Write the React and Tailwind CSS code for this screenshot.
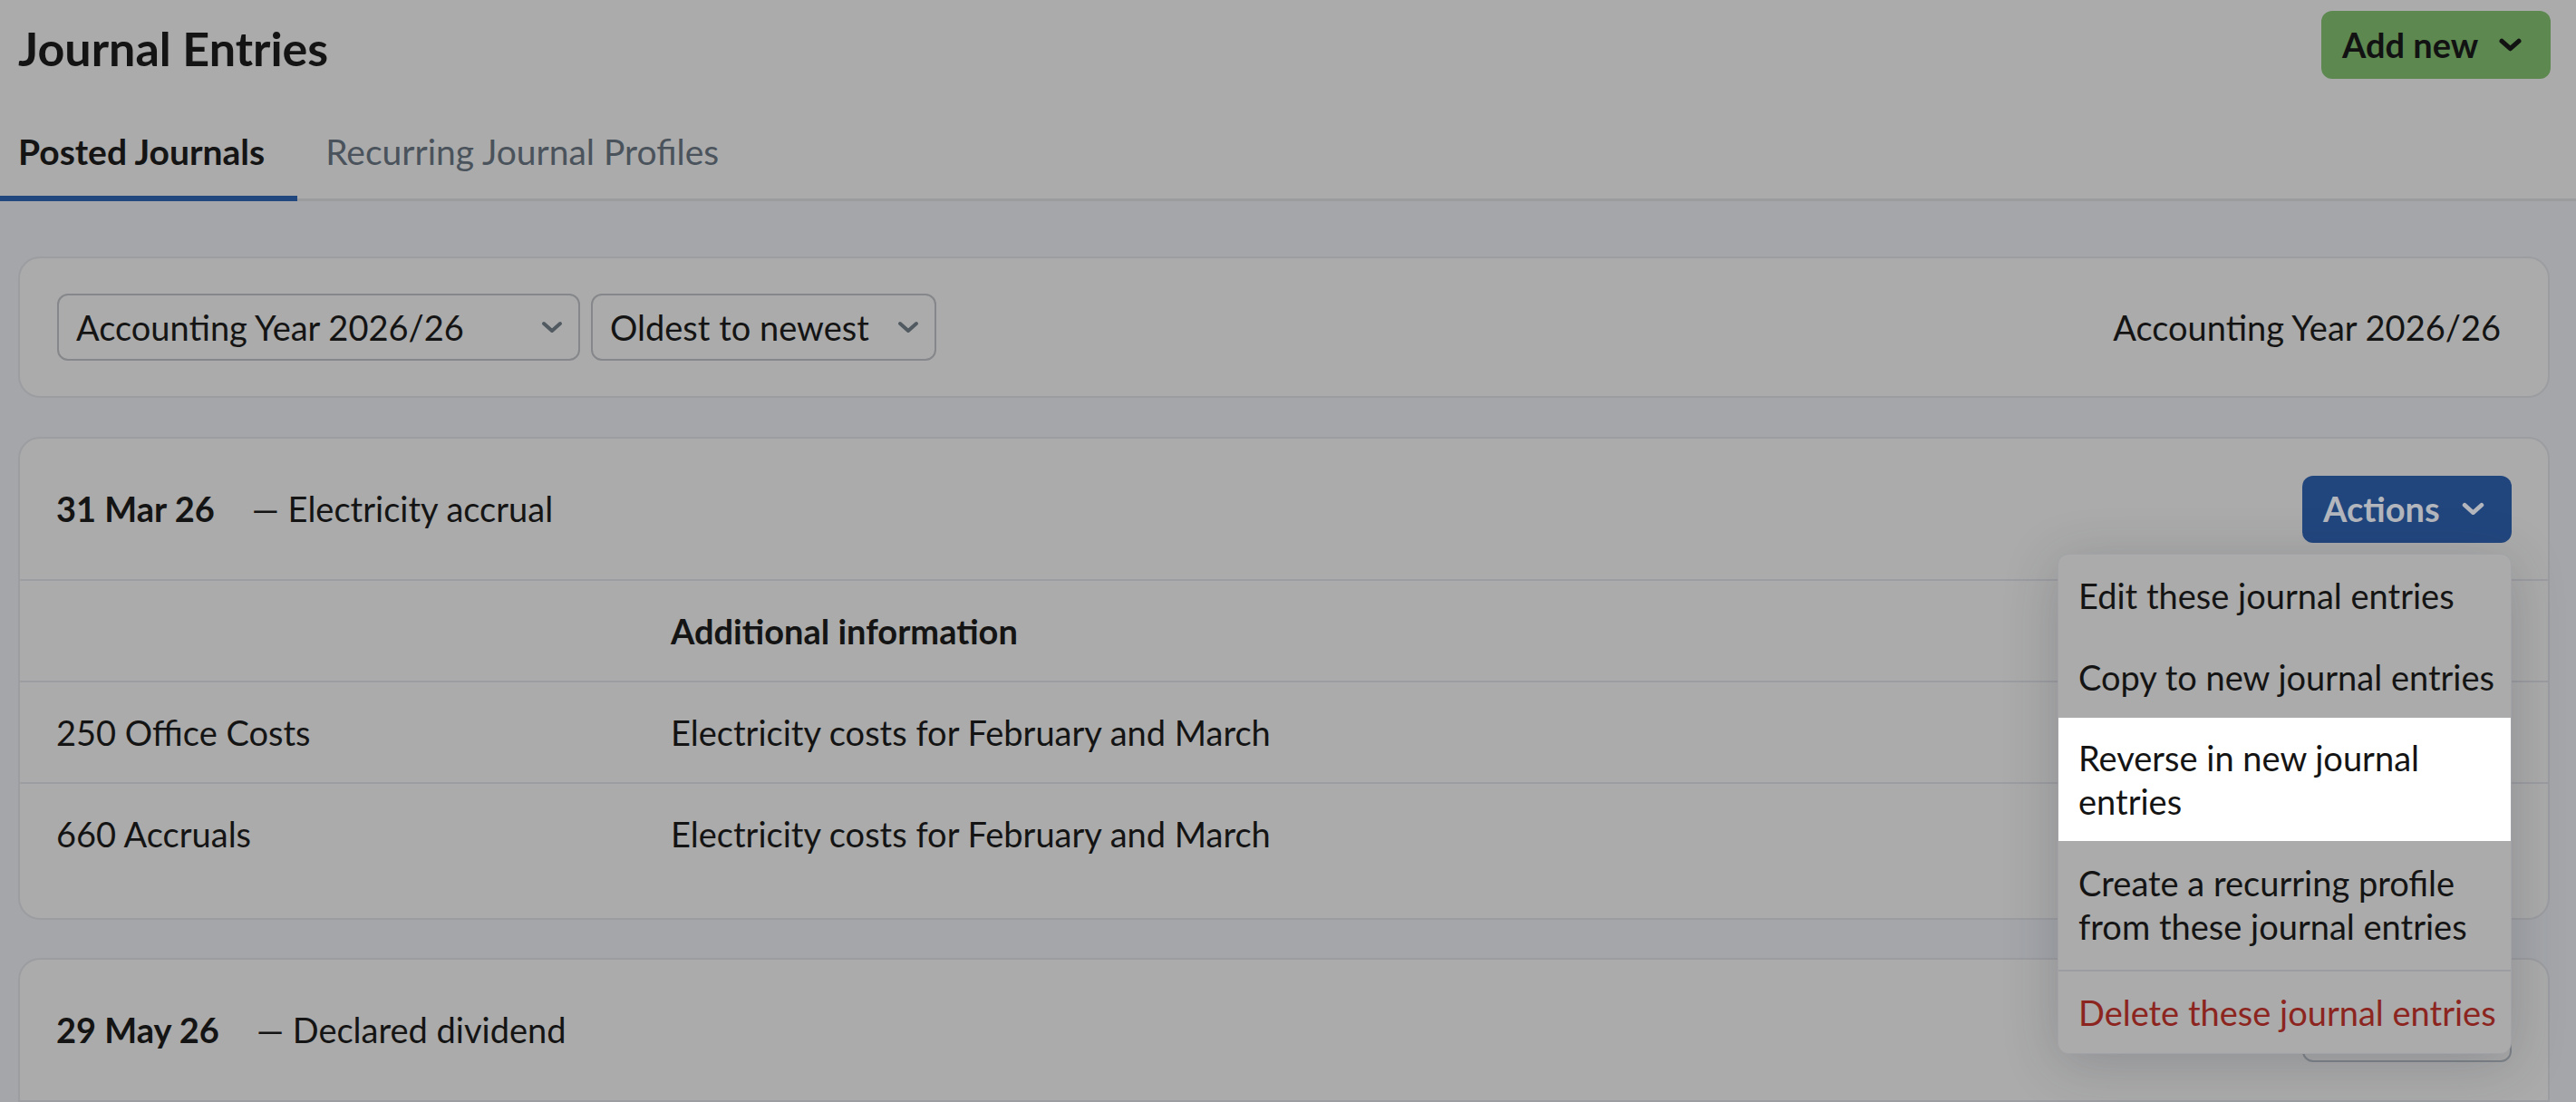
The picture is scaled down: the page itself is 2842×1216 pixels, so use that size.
import React from 'react';

const Chevron = ({ className = '', stroke = 'currentColor', width = 4 }) => (
  <svg viewBox="0 0 24 14" className={className} fill="none">
    <polyline points="3,3 12,11 21,3" stroke={stroke} strokeWidth={width} strokeLinecap="round" strokeLinejoin="round" />
  </svg>
);

const Select = ({ label, className }) => (
  <div className={`h-[74px] border-2 border-[#85878a] rounded-[12px] pl-[19px] pr-[17px] flex items-center justify-between ${className}`}>
    <span className="text-[38px] leading-none text-[#141414]">{label}</span>
    <Chevron className="w-[24px] h-[14px] text-[#505a60]" width={4} />
  </div>
);

const menuItems = [
  { label: 'Edit these journal entries' },
  { label: 'Copy to new journal entries' },
  { label: ['Reverse in new journal', 'entries'], active: true },
  { label: ['Create a recurring profile', 'from these journal entries'] },
];

const ActionsMenu = () => (
  <div className="absolute right-0 top-[86px] z-10 w-[501px] bg-[#ababab] border border-[#a2a3a7] rounded-[12px] shadow-[0_10px_60px_rgba(40,45,60,0.22)] overflow-hidden">
    {menuItems.map((item, i) => {
      const twoLine = Array.isArray(item.label);
      return (
        <div
          key={i}
          className={`px-[22px] whitespace-nowrap text-[38px] leading-[48px] text-[#141414] ${
            item.active ? 'bg-white' : ''
          } ${twoLine ? (item.active ? 'py-[20px]' : 'pt-[22px] pb-[24px]') : 'py-[21px]'}`}
        >
          {twoLine ? (
            <>
              {item.label[0]}
              <br />
              {item.label[1]}
            </>
          ) : (
            item.label
          )}
        </div>
      );
    })}
    <div className="border-t-2 border-[#9c9da1] px-[22px] py-[21px] whitespace-nowrap text-[38px] leading-[48px] text-[#8c2520]">
      Delete these journal entries
    </div>
  </div>
);

const Row = ({ account, info, last }) => (
  <div className={`flex items-center text-[38px] text-[#141414] ${last ? 'h-[148px] pb-[38px]' : 'h-[112px] border-b-2 border-[#9c9da1]'}`}>
    <div className="w-[718px] pl-[40px]">{account}</div>
    <div>{info}</div>
  </div>
);

const EntryCard = ({ date, desc, open, rows, className }) => (
  <div className={`bg-[#ababab] border-2 border-[#9c9da1] ${rows ? 'rounded-[24px]' : 'rounded-t-[24px] border-b-0'} ${className}`}>
    <div className="h-[157px] border-b-2 border-[#9c9da1] px-[40px] flex items-center justify-between">
      <div className="flex items-center text-[38px] text-[#141414]">
        <span className="font-bold">{date}</span>
        <span className="ml-[41px]">— {desc}</span>
      </div>
      <div className="relative">
        {open ? (
          <button className="h-[74px] w-[231px] bg-[#21467e] rounded-[12px] pl-[23px] pr-[30px] flex items-center justify-between text-[38px] font-bold text-[#b3b6bc]">
            Actions
            <Chevron className="w-[25px] h-[15px]" width={4.5} />
          </button>
        ) : (
          <button
            aria-label="Actions"
            className="h-[74px] w-[231px] bg-[#ababab] border-2 border-[#7f848a] rounded-[12px]"
          />
        )}
        {open && <ActionsMenu />}
      </div>
    </div>
    {rows && (
      <>
        <div className="flex items-center h-[112px] border-b-2 border-[#9c9da1] text-[38px] font-bold text-[#141414]">
          <div className="w-[718px] pl-[40px]"></div>
          <div>Additional information</div>
        </div>
        {rows.map((r, i) => (
          <Row key={i} account={r[0]} info={r[1]} last={i === rows.length - 1} />
        ))}
      </>
    )}
  </div>
);

export default function App() {
  return (
    <div className="min-h-screen bg-[#a4a6aa] font-['Lato',sans-serif] text-[#141414]">
      <header className="bg-[#ababab]">
        <div className="flex items-start justify-between pl-[20px] pr-[28px] pt-[12px]">
          <h1 className="mt-[11px] text-[52px] leading-[60px] font-bold">Journal Entries</h1>
          <button className="h-[75px] w-[253px] bg-[#5d8951] rounded-[12px] pl-[23px] pr-[32px] flex items-center justify-between text-[38px] font-bold text-[#121212]">
            Add new
            <Chevron className="w-[25px] h-[15px]" width={5} />
          </button>
        </div>
        <nav className="flex border-b-[3px] border-[#9b9c9e]">
          <div className="-mb-[3px] pl-[20px] pr-[36px] pt-[57px] pb-[26px] leading-[46px] text-[39px] font-bold border-b-[6px] border-[#21477f]">
            Posted Journals
          </div>
          <div className="-mb-[3px] pl-[31px] pr-[31px] pt-[57px] pb-[26px] leading-[46px] text-[39px] text-[#4a535c] border-b-[6px] border-transparent">
            Recurring Journal Profiles
          </div>
        </nav>
      </header>

      <main className="pl-[20px] pr-[29px] pt-[61px]">
        <div className="h-[156px] bg-[#ababab] border-2 border-[#9c9da1] rounded-[24px] pl-[41px] pr-[52px] flex items-center justify-between">
          <div className="flex items-center gap-[12px]">
            <Select label="Accounting Year 2026/26" className="w-[577px]" />
            <Select label="Oldest to newest" className="w-[381px]" />
          </div>
          <span className="text-[38px]">Accounting Year 2026/26</span>
        </div>

        <EntryCard
          className="mt-[43px]"
          date="31 Mar 26"
          desc="Electricity accrual"
          open
          rows={[
            ['250 Office Costs', 'Electricity costs for February and March'],
            ['660 Accruals', 'Electricity costs for February and March'],
          ]}
        />

        <EntryCard className="mt-[42px]" date="29 May 26" desc="Declared dividend" />
      </main>
    </div>
  );
}
